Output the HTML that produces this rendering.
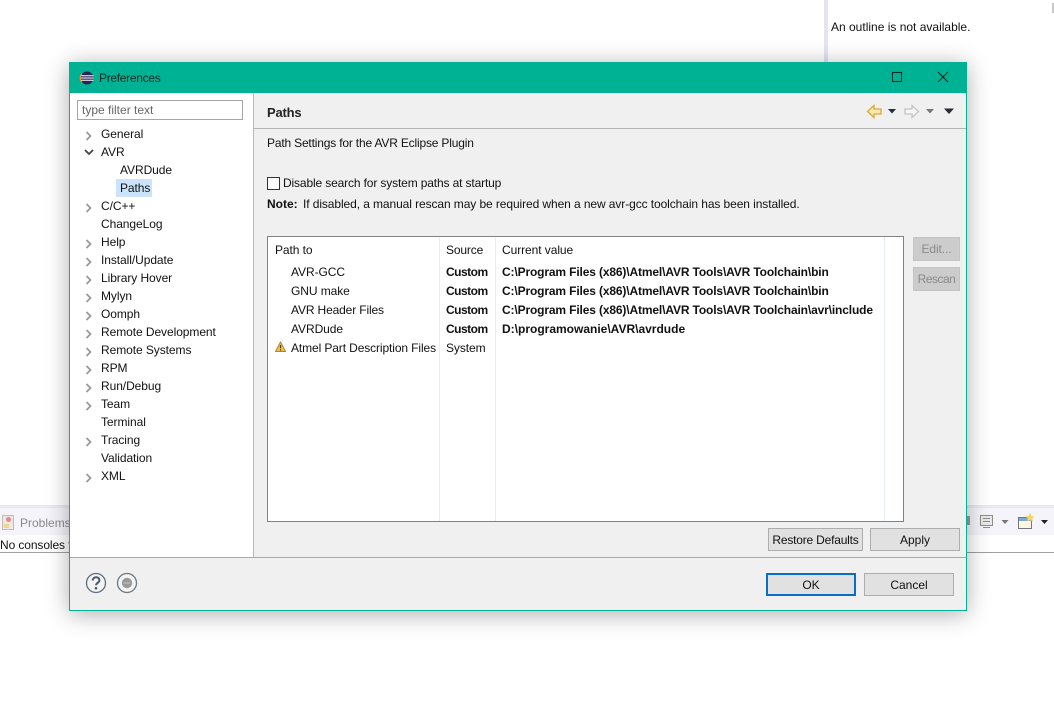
<!DOCTYPE html>
<html><head><meta charset="utf-8"><style>
html,body{margin:0;padding:0;background:#fff;width:1054px;height:717px;overflow:hidden}
body{position:relative;font:12px/16px "Liberation Sans",sans-serif;color:#111}
.t{position:absolute;white-space:nowrap}
.s{letter-spacing:-.07px}
.m{letter-spacing:-.14px}
.r{position:absolute}
.b{font-weight:bold;color:#111;letter-spacing:-.14px}
.c{font-weight:bold;color:#111;letter-spacing:-.5px}
.btn{position:absolute;background:#e1e1e1;border:1px solid #adadad;box-sizing:border-box;text-align:center;color:#111}
svg{position:absolute;overflow:visible}
</style></head><body>
<!-- background -->
<div class="r" style="left:824px;top:0;width:4px;height:62px;background:#e4e4f5"></div>
<div class="t" style="left:831px;top:19px;color:#111">An outline is not available.</div>
<div class="r" style="left:1052px;top:3px;width:2px;height:10px;background:#c8c8c8"></div>
<div class="r" style="left:0;top:505px;width:1054px;height:30px;background:#f4f4fa"></div>
<div class="r" style="left:0;top:505px;width:1054px;height:3px;background:#e9e9f2"></div>
<div class="r" style="left:0;top:552px;width:1054px;height:1px;background:#a0a0a0"></div>
<div class="t" style="left:20px;top:515px;color:#8a8a8a">Problems</div>
<div class="r" style="left:2px;top:515px;width:12px;height:15px;background:#efe6e6;border:1px solid #c8b8b8;box-sizing:border-box"></div>
<div class="r" style="left:6px;top:517px;width:5px;height:5px;background:#e08a8a;border-radius:3px"></div>
<div class="r" style="left:4px;top:524px;width:5px;height:4px;background:#e8d890"></div>
<div class="t" style="left:0;top:537px;color:#111;letter-spacing:-.1px">No consoles to display</div>
<svg style="left:960px;top:510px" width="94" height="24">
<path d="M7 6h3v9H7z" fill="#9a9a9a"/>
<rect x="20.500" y="5.500" width="12" height="10" fill="#e8e8e8" stroke="#8a8f8a"/><path d="M23 8.500h7M23 11.500h7M23 17.500h7" stroke="#8a8f8a"/>
<path d="M41.500 10h7l-3.500 4z" fill="#777"/>
<rect x="58.500" y="7.500" width="13" height="11" fill="#fdf8e0" stroke="#777"/><rect x="59" y="8" width="12" height="3" fill="#7fa8d8"/><path d="M70 3l1.500 3 3 .5-2.200 2 .5 3-2.800-1.500-2.800 1.500.5-3-2.200-2 3-.5z" fill="#f5d65a"/>
<path d="M81 10h7l-3.500 4z" fill="#222"/>
</svg>
<!-- dialog -->
<div class="r" style="left:69px;top:62px;width:898px;height:549px;background:#f0f0f0;box-sizing:border-box;border:1px solid #00b294;box-shadow:0 3px 22px rgba(0,0,0,.32)"></div>
<div class="r" style="left:69px;top:62px;width:898px;height:31px;background:#00b294"></div>
<svg style="left:80px;top:71px" width="14" height="14"><circle cx="7" cy="7" r="6.500" fill="#2c2255"/><path d="M.5 4.700h13M.5 7h13M.5 9.300h13" stroke="#fff" stroke-width="1"/><path d="M2 2.500A6.500 6.500 0 0 0 2 11.500" stroke="#f7941e" fill="none"/></svg>
<div class="t" style="left:99px;top:70px;color:#0b2a26;letter-spacing:-.3px">Preferences</div>
<svg style="left:840px;top:62px" width="120" height="31"><path d="M8 15.500h8" stroke="#12a58c"/><rect x="52.500" y="10.500" width="9" height="9" fill="none" stroke="#0c2b26" stroke-width="1.100"/><path d="M98 10l10 10M108 10l-10 10" stroke="#0c2b26" stroke-width="1.100" fill="none"/></svg>
<!-- left tree -->
<div class="r" style="left:70px;top:93px;width:184px;height:464px;background:#fff;border-right:1px solid #b9b9b9;box-sizing:border-box"></div>
<div class="r" style="left:77px;top:100px;width:166px;height:20px;background:#fff;border:1px solid #a5a5a5;box-sizing:border-box"></div>
<div class="t" style="left:82px;top:102px;color:#666">type filter text</div>
<div class="r" style="left:116px;top:179px;width:36px;height:18px;background:#cce4fb"></div>
<div class="t s" style="left:101px;top:126px">General</div>
<div class="t s" style="left:101px;top:144px">AVR</div>
<div class="t s" style="left:120px;top:162px">AVRDude</div>
<div class="t s" style="left:120px;top:180px">Paths</div>
<div class="t s" style="left:101px;top:198px">C/C++</div>
<div class="t s" style="left:101px;top:216px">ChangeLog</div>
<div class="t s" style="left:101px;top:234px">Help</div>
<div class="t s" style="left:101px;top:252px">Install/Update</div>
<div class="t s" style="left:101px;top:270px">Library Hover</div>
<div class="t s" style="left:101px;top:288px">Mylyn</div>
<div class="t s" style="left:101px;top:306px">Oomph</div>
<div class="t s" style="left:101px;top:324px">Remote Development</div>
<div class="t s" style="left:101px;top:342px">Remote Systems</div>
<div class="t s" style="left:101px;top:360px">RPM</div>
<div class="t s" style="left:101px;top:378px">Run/Debug</div>
<div class="t s" style="left:101px;top:396px">Team</div>
<div class="t s" style="left:101px;top:414px">Terminal</div>
<div class="t s" style="left:101px;top:432px">Tracing</div>
<div class="t s" style="left:101px;top:450px">Validation</div>
<div class="t s" style="left:101px;top:468px">XML</div>
<svg style="left:80px;top:125px" width="20" height="365" fill="none" stroke="#9a9a9a" stroke-width="1.800">
<path d="M6.500 7l4 4-4 4"/>
<path d="M5 25l4 4 4-4" stroke="#444"/>
<path d="M6.500 79l4 4-4 4M6.500 115l4 4-4 4M6.500 133l4 4-4 4M6.500 151l4 4-4 4M6.500 169l4 4-4 4M6.500 187l4 4-4 4M6.500 205l4 4-4 4M6.500 223l4 4-4 4M6.500 241l4 4-4 4M6.500 259l4 4-4 4M6.500 277l4 4-4 4M6.500 313l4 4-4 4M6.500 349l4 4-4 4"/>
</svg>
<!-- right header -->
<div class="t" style="left:267px;top:105px;font-weight:bold;font-size:13px;color:#222;letter-spacing:-.2px">Paths</div>
<div class="r" style="left:254px;top:128px;width:712px;height:1px;background:#b4b4b4"></div>
<svg style="left:860px;top:100px" width="100" height="22">
<path d="M7.500 11.500l6.500-6v3.500h7v5h-7v3.500z" fill="#fbe9b0" stroke="#d9a93a" stroke-width="1.300"/>
<path d="M28 9h8l-4 4.500z" fill="#2a2a3a"/>
<path d="M58.500 11.500l-6.500-6v3.500h-7v5h7v3.500z" fill="#f6f6f6" stroke="#c4c4c4" stroke-width="1.300"/>
<path d="M66 9h8l-4 4.500z" fill="#777"/>
<path d="M84 8.500h10l-5 5.500z" fill="#2a2a3a"/>
</svg>
<div class="t" style="left:267px;top:135px;letter-spacing:-.18px">Path Settings for the AVR Eclipse Plugin</div>
<div class="r" style="left:267px;top:177px;width:13px;height:13px;background:#fff;border:1px solid #333;box-sizing:border-box"></div>
<div class="t m" style="left:283px;top:175px">Disable search for system paths at startup</div>
<div class="t" style="left:267px;top:196px;font-weight:bold">Note:</div>
<div class="t" style="left:303px;top:196px;letter-spacing:-.09px">If disabled, a manual rescan may be required when a new avr-gcc toolchain has been installed.</div>
<!-- table -->
<div class="r" style="left:267px;top:236px;width:637px;height:286px;background:#fff;border:1px solid #828282;box-sizing:border-box"></div>
<div class="r" style="left:439px;top:237px;width:1px;height:284px;background:#e8eef5"></div>
<div class="r" style="left:495px;top:237px;width:1px;height:284px;background:#e8eef5"></div>
<div class="r" style="left:884px;top:237px;width:1px;height:284px;background:#e8eef5"></div>
<div class="t s" style="left:275px;top:242px">Path to</div>
<div class="t m" style="left:446px;top:242px">Source</div>
<div class="t s" style="left:502px;top:242px">Current value</div>
<div class="t s" style="left:291px;top:264px">AVR-GCC</div>
<div class="t c" style="left:446px;top:264px">Custom</div>
<div class="t b" style="left:502px;top:264px">C:\Program Files (x86)\Atmel\AVR Tools\AVR Toolchain\bin</div>
<div class="t s" style="left:291px;top:283px">GNU make</div>
<div class="t c" style="left:446px;top:283px">Custom</div>
<div class="t b" style="left:502px;top:283px">C:\Program Files (x86)\Atmel\AVR Tools\AVR Toolchain\bin</div>
<div class="t m" style="left:291px;top:302px">AVR Header Files</div>
<div class="t c" style="left:446px;top:302px">Custom</div>
<div class="t b" style="left:502px;top:302px">C:\Program Files (x86)\Atmel\AVR Tools\AVR Toolchain\avr\include</div>
<div class="t s" style="left:291px;top:321px">AVRDude</div>
<div class="t c" style="left:446px;top:321px">Custom</div>
<div class="t" style="left:502px;top:321px;font-weight:bold">D:\programowanie\AVR\avrdude</div>
<div class="t" style="left:291px;top:340px;letter-spacing:-.11px">Atmel Part Description Files</div>
<div class="t s" style="left:446px;top:340px">System</div>
<svg style="left:275px;top:341px" width="12" height="12"><path d="M5.500 1L10.500 10.500H.5z" fill="#f5c542" stroke="#a5853c" stroke-linejoin="round"/><path d="M5.500 4v3.300M5.500 8.300v1.300" stroke="#4a3a20" stroke-width="1.200"/></svg>
<!-- side buttons -->
<div class="btn" style="left:913px;top:237px;width:47px;height:24px;line-height:22px;background:#ccc;border-color:#c4c4c4;color:#8a8a8a;letter-spacing:-.1px">Edit...</div>
<div class="btn" style="left:913px;top:267px;width:47px;height:24px;line-height:22px;background:#ccc;border-color:#c4c4c4;color:#8a8a8a;letter-spacing:-.5px">Rescan</div>
<div class="btn" style="left:768px;top:528px;width:95px;height:23px;line-height:22px;letter-spacing:-.2px">Restore Defaults</div>
<div class="btn" style="left:870px;top:528px;width:90px;height:23px;line-height:22px">Apply</div>
<!-- footer -->
<div class="r" style="left:70px;top:557px;width:896px;height:1px;background:#a9a9a9"></div>
<svg style="left:85px;top:572px" width="60" height="24">
<circle cx="11" cy="11" r="9.500" fill="#f4f4f4" stroke="#5d6b80" stroke-width="1.300"/>
<path d="M7.800 8.500c0-4.300 6.600-4.300 6.600-.3 0 2.700-3.300 2.500-3.300 5" fill="none" stroke="#4d5a72" stroke-width="2"/><circle cx="11" cy="16.200" r="1.300" fill="#4d5a72"/>
<circle cx="42" cy="11" r="9.500" fill="#f4f4f4" stroke="#6d7580" stroke-width="1.300"/>
<circle cx="42" cy="11" r="5.200" fill="#9a9a9a"/>
<path d="M38.500 11h7" stroke="#c4c4c4"/>
</svg>
<div class="btn" style="left:766px;top:573px;width:90px;height:23px;line-height:20px;border:2px solid #0a6fc4">OK</div>
<div class="btn" style="left:864px;top:573px;width:90px;height:23px;line-height:22px">Cancel</div>
</body></html>
